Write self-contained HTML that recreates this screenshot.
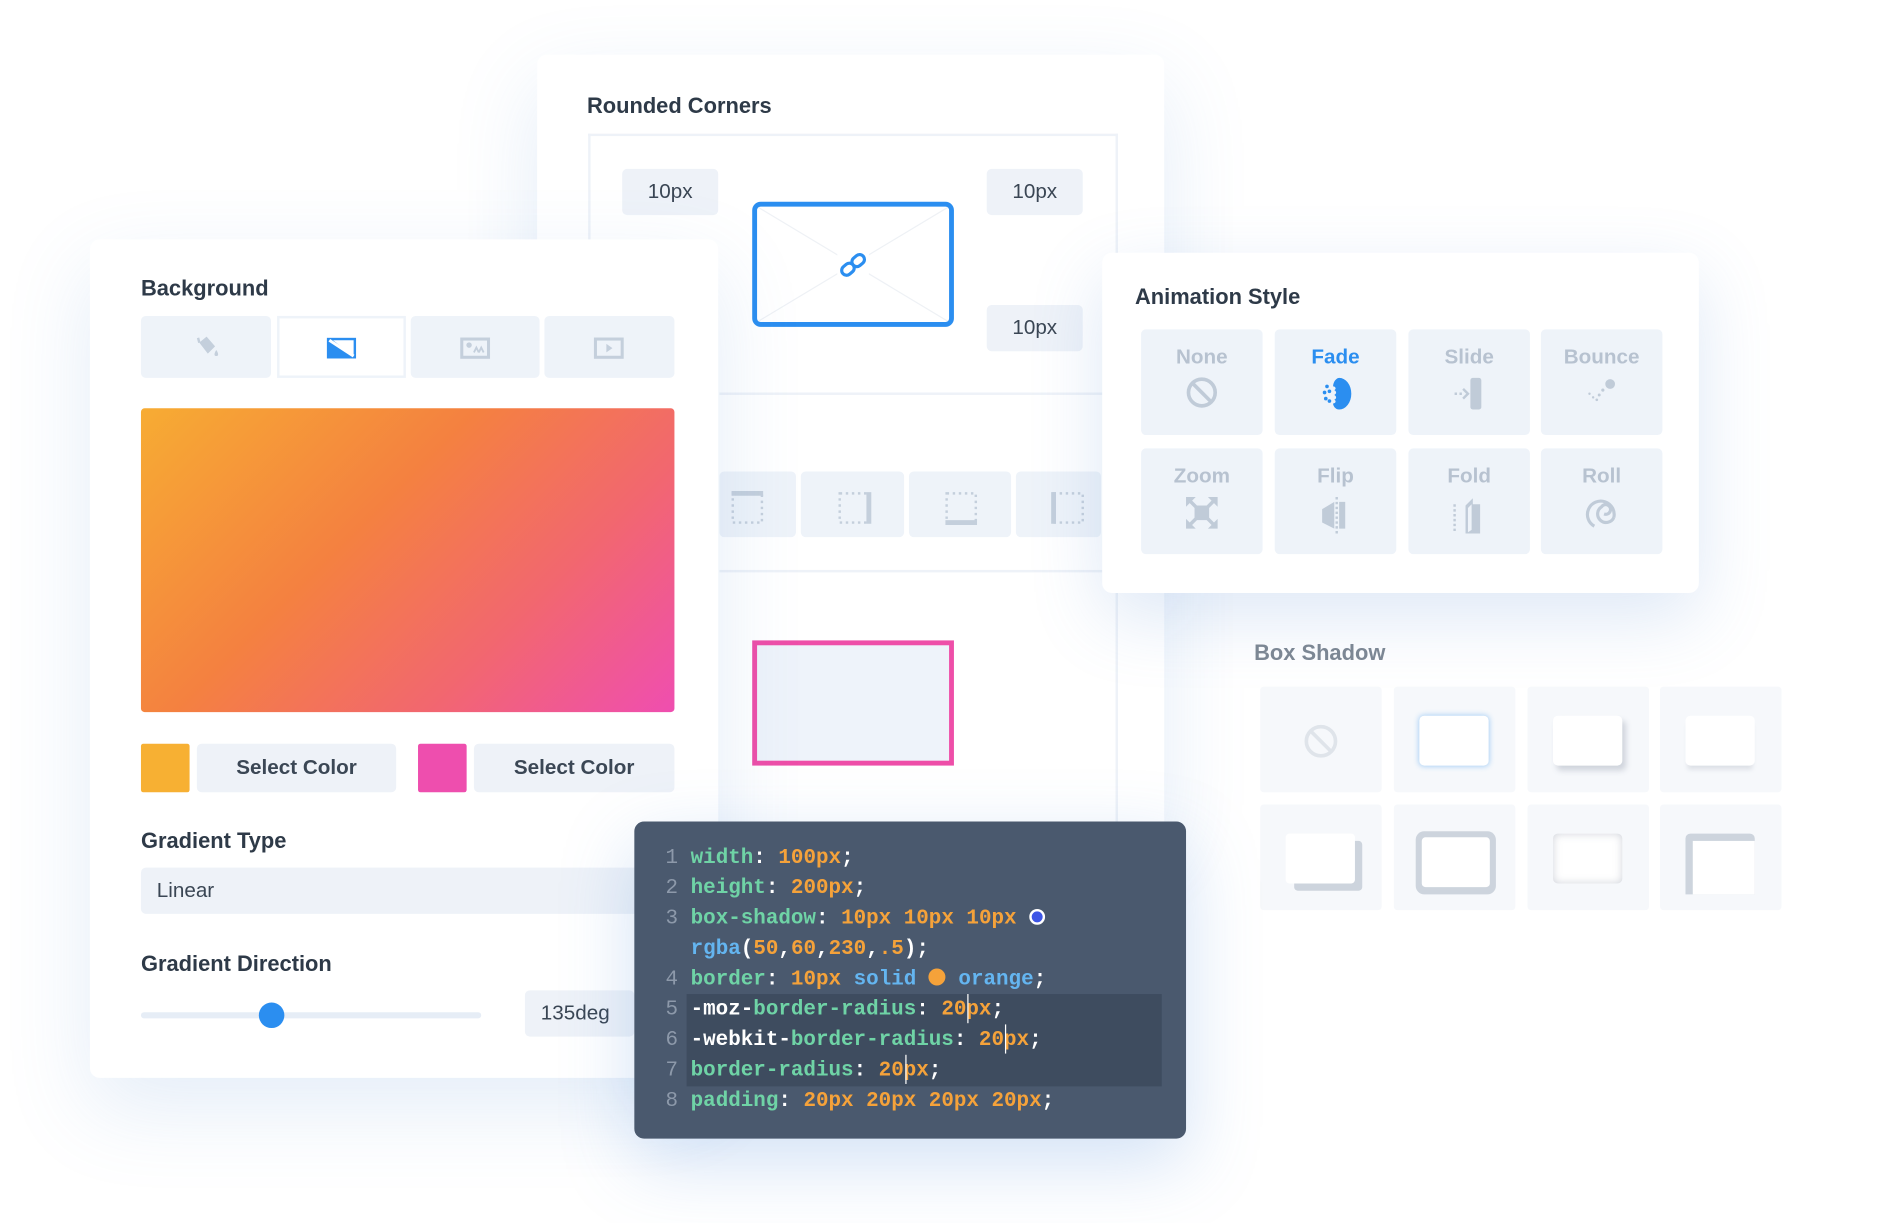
<!DOCTYPE html>
<html><head><meta charset="utf-8"><style>
*{box-sizing:border-box;margin:0;padding:0}
html,body{width:1904px;height:1222px;overflow:hidden;background:#fff;font-family:"Liberation Sans",sans-serif}
#s{position:absolute;left:0;top:0;width:1570px;height:1006px;transform:scale(1.2152,1.2152);transform-origin:0 0}
.a{position:absolute}
.panel{position:absolute;background:#fff;border-radius:8px;box-shadow:0 25px 70px rgba(90,140,210,.16)}
.t{position:absolute;font-size:18px;font-weight:600;color:#2e3a48}
.in{position:absolute;background:#eef2f8;border-radius:4px;color:#3a4654;font-size:17px;display:flex;align-items:center;justify-content:center}
.cell{position:absolute;background:#eef3f9;border-radius:4px}
.an{position:absolute;width:100px;height:87px;background:#eef3f9;border-radius:4px;text-align:center;font-size:17px;font-weight:700;color:#b7c2d0;padding-top:13px}
.an svg{display:block;margin:6px auto 0}
.bs{position:absolute;width:100px;height:87px;background:#f6f8fb;border-radius:3px}
.code{position:absolute;left:522px;top:676px;width:454px;height:261px;background:#4a596e;border-radius:8px;box-shadow:0 20px 60px rgba(80,140,220,.25);font-family:"Liberation Mono",monospace;font-weight:700;font-size:17.2px;color:#fff}
.ln{position:absolute;left:0;width:454px;height:25px;line-height:25px;white-space:pre}
.ln b{display:inline-block;width:36px;text-align:right;color:#8d99aa;font-weight:400}
.k{color:#6fd3a6}.n{color:#f5a23a}.v{color:#64b5f0}.w{color:#fff}
</style></head><body><div id="s">

<div class="panel" style="left:442px;top:45px;width:516px;height:640px"></div>
<div class="t" style="left:483px;top:77px">Rounded Corners</div>
<div class="a" style="left:484px;top:110px;width:436px;height:570px;border:2px solid #eef2f8;border-bottom:none"></div>
<div class="a" style="left:592px;top:323px;width:326px;height:2px;background:#eef2f8"></div>
<div class="a" style="left:592px;top:469px;width:326px;height:2px;background:#eef2f8"></div>
<div class="in" style="left:512px;top:139px;width:79px;height:38px">10px</div>
<div class="in" style="left:812px;top:139px;width:79px;height:38px">10px</div>
<div class="in" style="left:812px;top:251px;width:79px;height:38px">10px</div>
<div class="a" style="left:619px;top:166px;width:166px;height:103px;border:4px solid #2b8ef0;border-radius:7px;background:#fff;overflow:hidden">
<svg width="158" height="95" style="position:absolute;left:0;top:0"><path d="M0 0L158 95M158 0L0 95" stroke="#eef1f5" stroke-width="1"/><rect x="66" y="37" width="26" height="22" fill="#fff"/><g transform="translate(79 48) rotate(-40)" fill="none" stroke="#2b8ef0" stroke-width="2.6"><rect x="-11" y="-4" width="11" height="8" rx="4"/><rect x="0" y="-4" width="11" height="8" rx="4"/></g></svg></div>
<div class="cell" style="left:592px;top:388px;width:63px;height:54px"></div>
<div class="cell" style="left:659px;top:388px;width:85px;height:54px"></div>
<div class="cell" style="left:748px;top:388px;width:84px;height:54px"></div>
<div class="cell" style="left:836px;top:388px;width:70px;height:54px"></div>
<svg class="a" style="left:600px;top:402px" width="300" height="30" fill="none" stroke="#c4cfdc" stroke-width="2"><rect x="3" y="4" width="24" height="24" stroke-dasharray="2 3"/><path d="M2 4h26" stroke-width="4"/><rect x="91" y="4" width="24" height="24" stroke-dasharray="2 3"/><path d="M115 3v26" stroke-width="4"/><rect x="179" y="4" width="24" height="24" stroke-dasharray="2 3"/><path d="M178 28h26" stroke-width="4"/><rect x="267" y="4" width="24" height="24" stroke-dasharray="2 3"/><path d="M267 3v26" stroke-width="4"/></svg>
<div class="a" style="left:619px;top:527px;width:166px;height:103px;border:4px solid #ee4ea8;background:#eef3fa"></div>

<div class="panel" style="left:74px;top:197px;width:517px;height:690px"></div>
<div class="t" style="left:116px;top:227px">Background</div>
<div class="cell" style="left:116px;top:260px;width:107px;height:51px"></div>
<div class="a" style="left:228px;top:260px;width:106px;height:51px;background:#fff;border:2px solid #eef3f9"></div>
<div class="cell" style="left:338px;top:260px;width:106px;height:51px"></div>
<div class="cell" style="left:448px;top:260px;width:107px;height:51px"></div>
<svg class="a" style="left:160px;top:276px" width="22" height="20"><path d="M4 6l6-5 7 8-6 6z" fill="#c4cfdc"/><path d="M4 6L3 2" stroke="#c4cfdc" stroke-width="2"/><path d="M18 12c2 3 2 5 0 5s-2-2 0-5z" fill="#c4cfdc"/></svg>
<svg class="a" style="left:268px;top:277px" width="26" height="19"><rect x="1" y="1" width="24" height="17" fill="#2b8ef0"/><path d="M3 3L23 16" stroke="#fff" stroke-width="2.5"/><path d="M6 3h17v13z" fill="#fff"/></svg>
<svg class="a" style="left:378px;top:277px" width="26" height="19" fill="none" stroke="#c4cfdc" stroke-width="2.5"><rect x="2" y="2" width="22" height="15"/><circle cx="8" cy="7" r="1" fill="#c4cfdc"/><path d="M12 13l2-4 2 4M16 13l2-4 2 4" stroke-width="1.5"/></svg>
<svg class="a" style="left:488px;top:277px" width="26" height="19" fill="none" stroke="#c4cfdc" stroke-width="2.5"><rect x="2" y="2" width="22" height="15"/><path d="M11 6l5 3.5-5 3.5z" fill="#c4cfdc" stroke="none"/></svg>
<div class="a" style="left:116px;top:336px;width:439px;height:250px;border-radius:3px;background:linear-gradient(135deg,#f7ac33 0%,#f48140 40%,#f2676f 70%,#ef4eb0 100%)"></div>
<div class="a" style="left:116px;top:612px;width:40px;height:40px;background:#f7b033;border-radius:2px"></div>
<div class="in" style="left:162px;top:612px;width:164px;height:40px;font-weight:600;color:#3b4755">Select Color</div>
<div class="a" style="left:344px;top:612px;width:40px;height:40px;background:#ee4eae;border-radius:2px"></div>
<div class="in" style="left:390px;top:612px;width:165px;height:40px;font-weight:600;color:#3b4755">Select Color</div>
<div class="t" style="left:116px;top:682px">Gradient Type</div>
<div class="in" style="left:116px;top:714px;width:420px;height:38px;justify-content:flex-start;padding-left:13px">Linear</div>
<div class="t" style="left:116px;top:783px">Gradient Direction</div>
<div class="a" style="left:116px;top:833px;width:280px;height:5px;background:#e6edf6;border-radius:3px"></div>
<div class="a" style="left:213px;top:825px;width:21px;height:21px;background:#2b8ef0;border-radius:50%"></div>
<div class="in" style="left:432px;top:815px;width:90px;height:38px;justify-content:flex-start;padding-left:13px">135deg</div>

<div class="panel" style="left:907px;top:208px;width:491px;height:280px;box-shadow:0 20px 60px rgba(90,140,210,.2)"></div>
<div class="t" style="left:934px;top:234px">Animation Style</div>
<div class="an" style="left:939px;top:271px">None<svg width="26" height="26"><circle cx="13" cy="13" r="11" fill="none" stroke="#c0cbd8" stroke-width="3"/><path d="M5 5l16 16" stroke="#c0cbd8" stroke-width="3"/></svg></div>
<div class="an" style="left:1049px;top:271px;color:#2b8ef0">Fade<svg width="28" height="28"><path d="M17 1a10 13 0 0 1 0 26c-3 0-5-3-5-5 2 0 3-2 1-3 2-1 2-3 0-4 2-1 2-3 0-4 2-1 1-3-1-3 0-4 3-7 5-7z" fill="#2b8ef0"/><g fill="#2b8ef0"><circle cx="7" cy="8" r="1.5"/><circle cx="5" cy="13" r="1.5"/><circle cx="9" cy="12" r="1.5"/><circle cx="6" cy="18" r="1.5"/><circle cx="9" cy="20" r="1.5"/></g></svg></div>
<div class="an" style="left:1159px;top:271px">Slide<svg width="30" height="28"><rect x="16" y="1" width="9" height="26" rx="2" fill="#c0cbd8"/><path d="M3 14h2M7 14h2M10 10l4 4-4 4" stroke="#c0cbd8" stroke-width="2" fill="none"/></svg></div>
<div class="an" style="left:1268px;top:271px">Bounce<svg width="30" height="28"><circle cx="22" cy="6" r="4" fill="#c0cbd8"/><g fill="#c0cbd8"><circle cx="16" cy="11" r="1.3"/><circle cx="13" cy="15" r="1.2"/><circle cx="11" cy="19" r="1.1"/><circle cx="8" cy="17" r="1"/><circle cx="5" cy="14" r="1"/></g></svg></div>
<div class="an" style="left:939px;top:369px">Zoom<svg width="28" height="28" fill="#c0cbd8"><rect x="8" y="8" width="12" height="12"/><path d="M1 1h8l-3 3 4 4-2 2-4-4-3 3zM27 1v8l-3-3-4 4-2-2 4-4-3-3zM1 27v-8l3 3 4-4 2 2-4 4 3 3zM27 27h-8l3-3-4-4 2-2 4 4 3-3z"/></svg></div>
<div class="an" style="left:1049px;top:369px">Flip<svg width="28" height="32"><path d="M3 11l10-6v22l-10-5z" fill="#c0cbd8"/><path d="M15 1v30" stroke="#c0cbd8" stroke-width="2" stroke-dasharray="2 2"/><path d="M17 5v22h5V5z" fill="#c0cbd8"/></svg></div>
<div class="an" style="left:1159px;top:369px">Fold<svg width="30" height="32"><path d="M3 7v24" stroke="#c0cbd8" stroke-width="2" stroke-dasharray="2 2"/><path d="M12 8l6-6v5h6v24H12z" fill="#c0cbd8"/><path d="M14 10l3-3v21l-3 2z" fill="#eef3f9"/></svg></div>
<div class="an" style="left:1268px;top:369px">Roll<svg width="28" height="28" fill="none" stroke="#c0cbd8" stroke-width="2.6"><path d="M8 25A11 11 0 1 1 24 18M24 18a7 7 0 1 1-10-9a4 4 0 1 1 2 6"/></svg></div>

<div class="a" style="left:1032px;top:527px;font-size:18px;font-weight:600;color:#7c8794">Box Shadow</div>
<div class="bs" style="left:1037px;top:565px"><svg style="position:absolute;left:35px;top:30px" width="30" height="30"><circle cx="15" cy="15" r="12" fill="none" stroke="#dfe4ea" stroke-width="3"/><path d="M7 7l16 16" stroke="#dfe4ea" stroke-width="3"/></svg></div>
<div class="bs" style="left:1147px;top:565px"><div class="a" style="left:21px;top:24px;width:57px;height:41px;background:#fff;border-radius:4px;box-shadow:0 0 5px rgba(43,142,240,.45)"></div></div>
<div class="bs" style="left:1257px;top:565px"><div class="a" style="left:21px;top:24px;width:57px;height:41px;background:#fff;border-radius:4px;box-shadow:3px 4px 5px rgba(120,130,150,.3)"></div></div>
<div class="bs" style="left:1366px;top:565px"><div class="a" style="left:21px;top:24px;width:57px;height:41px;background:#fff;border-radius:4px;box-shadow:0 5px 4px -2px rgba(120,130,150,.2)"></div></div>
<div class="bs" style="left:1037px;top:662px"><div class="a" style="left:28px;top:30px;width:56px;height:41px;background:#cdd4dd;border-radius:3px"></div><div class="a" style="left:21px;top:24px;width:57px;height:41px;background:#fff;border-radius:3px"></div></div>
<div class="bs" style="left:1147px;top:662px"><div class="a" style="left:18px;top:22px;width:66px;height:52px;background:#cdd4dd;border-radius:7px"></div><div class="a" style="left:23px;top:27px;width:56px;height:41px;background:#fff;border-radius:3px"></div></div>
<div class="bs" style="left:1257px;top:662px"><div class="a" style="left:21px;top:24px;width:57px;height:41px;background:#fff;border-radius:4px;box-shadow:inset 0 0 7px rgba(120,130,150,.35)"></div></div>
<div class="bs" style="left:1366px;top:662px"><div class="a" style="left:21px;top:24px;width:57px;height:50px;background:#cdd4dd;border-radius:4px 4px 0 0"></div><div class="a" style="left:27px;top:30px;width:51px;height:44px;background:#fff"></div></div>

<div class="code">
<div class="a" style="left:43px;top:142px;width:391px;height:76px;background:#3e4c5f"></div>
<div class="ln" style="top:18px"><b>1</b> <span class="k">width</span>: <span class="n">100px</span>;</div>
<div class="ln" style="top:43px"><b>2</b> <span class="k">height</span>: <span class="n">200px</span>;</div>
<div class="ln" style="top:68px"><b>3</b> <span class="k">box-shadow</span>: <span class="n">10px 10px 10px</span> <span style="display:inline-block;width:13px;height:13px;border-radius:50%;background:#3d55e6;border:2px solid #fff;vertical-align:-1px"></span></div>
<div class="ln" style="top:93px"><b> </b> <span class="v">rgba</span>(<span class="n">50</span>,<span class="n">60</span>,<span class="n">230</span>,<span class="n">.5</span>);</div>
<div class="ln" style="top:118px"><b>4</b> <span class="k">border</span>: <span class="n">10px</span> <span class="v">solid</span> <span style="display:inline-block;width:14px;height:14px;border-radius:50%;background:#f5a23a;vertical-align:-1px"></span> <span class="v">orange</span>;</div>
<div class="ln" style="top:143px"><b>5</b> -moz-<span class="k">border-radius</span>: <span class="n">20px</span>;</div>
<div class="ln" style="top:168px"><b>6</b> -webkit-<span class="k">border-radius</span>: <span class="n">20px</span>;</div>
<div class="ln" style="top:193px"><b>7</b> <span class="k">border-radius</span>: <span class="n">20px</span>;</div>
<div class="ln" style="top:218px"><b>8</b> <span class="k">padding</span>: <span class="n">20px 20px 20px 20px</span>;</div>
<div class="a" style="left:274px;top:142px;width:1px;height:24px;background:#fff"></div>
<div class="a" style="left:305px;top:167px;width:1px;height:24px;background:#fff"></div>
<div class="a" style="left:223px;top:192px;width:1px;height:24px;background:#fff"></div>
</div>

</div></body></html>
